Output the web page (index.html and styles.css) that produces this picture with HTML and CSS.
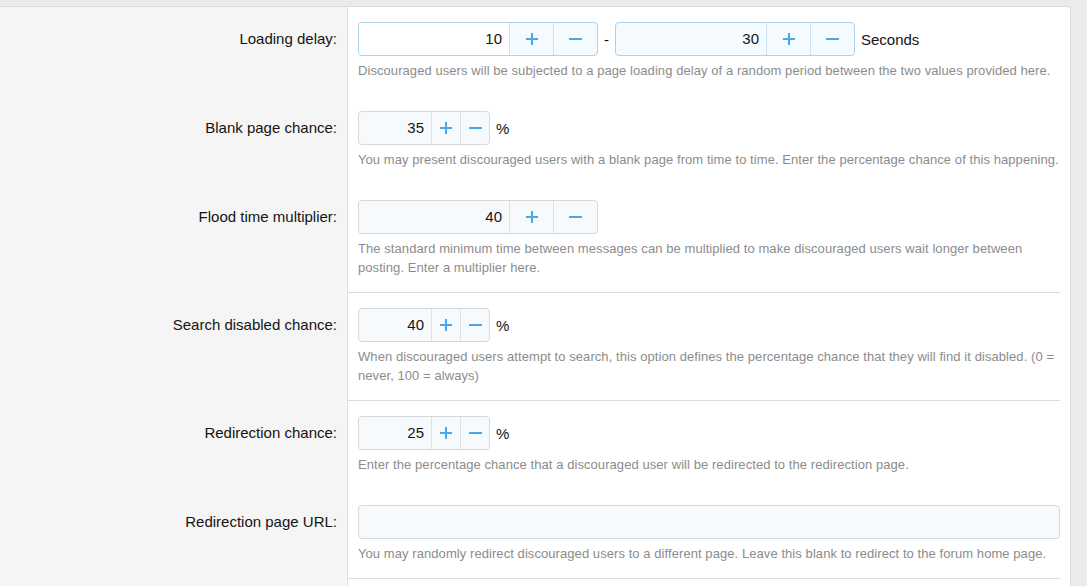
FILE: index.html
```html
<!DOCTYPE html>
<html>
<head>
<meta charset="utf-8">
<link rel="stylesheet" href="styles.css">
</head>
<body>
<div class="block">
  <div class="row">
    <div class="label">Loading delay:</div>
    <div class="control">
      <div class="inline">
        <div class="num num--wide num--focus"><span class="num-val num-val--white">10</span><span class="num-btn"><svg width="12" height="12" viewBox="0 0 12 12"><path d="M6 0V12M0 6H12"/></svg></span><span class="num-btn"><svg width="13" height="12" viewBox="0 0 13 12"><path d="M0 6H13"/></svg></span></div>
        <span class="txt">-</span>
        <div class="num num--wide num--focus"><span class="num-val">30</span><span class="num-btn"><svg width="12" height="12" viewBox="0 0 12 12"><path d="M6 0V12M0 6H12"/></svg></span><span class="num-btn"><svg width="13" height="12" viewBox="0 0 13 12"><path d="M0 6H13"/></svg></span></div>
        <span class="txt">Seconds</span>
      </div>
      <div class="hint">Discouraged users will be subjected to a page loading delay of a random period between the two values provided here.</div>
    </div>
  </div>
  <div class="row">
    <div class="label">Blank page chance:</div>
    <div class="control">
      <div class="inline">
        <div class="num num--small"><span class="num-val">35</span><span class="num-btn"><svg width="12" height="12" viewBox="0 0 12 12"><path d="M6 0V12M0 6H12"/></svg></span><span class="num-btn"><svg width="13" height="12" viewBox="0 0 13 12"><path d="M0 6H13"/></svg></span></div>
        <span class="txt">%</span>
      </div>
      <div class="hint">You may present discouraged users with a blank page from time to time. Enter the percentage chance of this happening.</div>
    </div>
  </div>
  <div class="row row--sep">
    <div class="label">Flood time multiplier:</div>
    <div class="control">
      <div class="inline">
        <div class="num num--wide"><span class="num-val">40</span><span class="num-btn"><svg width="12" height="12" viewBox="0 0 12 12"><path d="M6 0V12M0 6H12"/></svg></span><span class="num-btn"><svg width="13" height="12" viewBox="0 0 13 12"><path d="M0 6H13"/></svg></span></div>
      </div>
      <div class="hint">The standard minimum time between messages can be multiplied to make discouraged users wait longer between posting. Enter a multiplier here.</div>
    </div>
  </div>
  <div class="row row--sep">
    <div class="label">Search disabled chance:</div>
    <div class="control">
      <div class="inline">
        <div class="num num--small"><span class="num-val">40</span><span class="num-btn"><svg width="12" height="12" viewBox="0 0 12 12"><path d="M6 0V12M0 6H12"/></svg></span><span class="num-btn"><svg width="13" height="12" viewBox="0 0 13 12"><path d="M0 6H13"/></svg></span></div>
        <span class="txt">%</span>
      </div>
      <div class="hint">When discouraged users attempt to search, this option defines the percentage chance that they will find it disabled. (0 = never, 100 = always)</div>
    </div>
  </div>
  <div class="row">
    <div class="label">Redirection chance:</div>
    <div class="control">
      <div class="inline">
        <div class="num num--small"><span class="num-val">25</span><span class="num-btn"><svg width="12" height="12" viewBox="0 0 12 12"><path d="M6 0V12M0 6H12"/></svg></span><span class="num-btn"><svg width="13" height="12" viewBox="0 0 13 12"><path d="M0 6H13"/></svg></span></div>
        <span class="txt">%</span>
      </div>
      <div class="hint">Enter the percentage chance that a discouraged user will be redirected to the redirection page.</div>
    </div>
  </div>
  <div class="row row--sep">
    <div class="label">Redirection page URL:</div>
    <div class="control">
      <div class="text-input"></div>
      <div class="hint">You may randomly redirect discouraged users to a different page. Leave this blank to redirect to the forum home page.</div>
    </div>
  </div>
  <div class="row">
    <div class="label"></div>
    <div class="control control--tail"></div>
  </div>
</div>
</body>
</html>
```

FILE: styles.css
```css
html, body {
  margin: 0;
  padding: 0;
}
body {
  background: #ebebeb;
  font-family: "Liberation Sans", Arial, Helvetica, sans-serif;
  color: #141414;
  overflow: hidden;
}
.block {
  width: 1071px;
  box-sizing: border-box;
  margin-top: 6px;
  background: #fff;
  border: 1px solid #dcdcdc;
  border-left: 0;
  border-radius: 0 4px 0 0;
  padding-right: 10px;
}
.row {
  display: flex;
}
.label {
  width: 348px;
  flex: none;
  box-sizing: border-box;
  background: #f5f5f5;
  border-right: 1px solid #e0e0e0;
  padding: 15px 10px 0 0;
  text-align: right;
  font-size: 15px;
  line-height: 34px;
}
.control {
  flex: 1;
  min-width: 0;
  padding: 15px 0 15px 10px;
  border-bottom: 1px solid transparent;
}
.row--sep .control {
  border-bottom-color: #dddddd;
}
.control--tail {
  height: 40px;
}
.inline {
  display: flex;
  align-items: center;
  gap: 6px;
  height: 34px;
}
.txt {
  font-size: 15px;
}
.num {
  display: flex;
  height: 34px;
  box-sizing: border-box;
  border: 1px solid #d8d8d8;
  border-radius: 4px;
  background: #f7fafd;
  overflow: hidden;
}
.num--wide {
  width: 240px;
}
.num--small {
  width: 132px;
}
.num-val {
  flex: 1;
  text-align: right;
  padding-right: 7px;
  font-size: 15px;
  line-height: 32px;
}
.num-val--white {
  background: #fff;
}
.num-btn {
  flex: none;
  display: flex;
  align-items: center;
  justify-content: center;
  box-sizing: border-box;
  border-left: 1px solid #e0e0e0;
}
.num--wide .num-btn {
  width: 44px;
}
.num--small .num-btn {
  width: 29px;
}
.num-btn svg {
  stroke: #47a7eb;
  stroke-width: 2;
  fill: none;
}
.num--focus {
  border-color: #a9d3f1;
  background: #f5faff;
}
.num--focus .num-btn {
  border-left-color: #c8e3f7;
}
.hint {
  margin-top: 5px;
  font-size: 13px;
  letter-spacing: 0.07px;
  line-height: 19px;
  color: #8c8c8c;
}
.text-input {
  height: 34px;
  box-sizing: border-box;
  border: 1px solid #d8d8d8;
  border-radius: 4px;
  background: #f7fafd;
}
```
